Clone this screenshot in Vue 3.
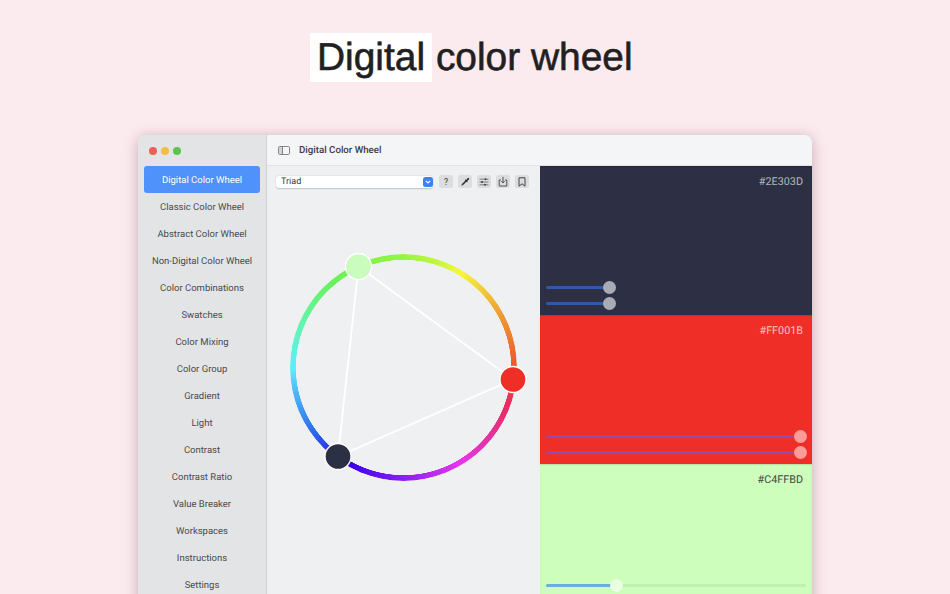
<template>
  <div class="page">
    <h1 class="headline"><span class="mark">Digital</span> color wheel</h1>

    <div class="window">
      <aside class="sidebar">
        <div class="traffic">
          <i class="dot red"></i>
          <i class="dot yellow"></i>
          <i class="dot green"></i>
        </div>
        <nav class="nav">
          <div
            v-for="(item, idx) in menu"
            :key="item"
            class="nav-item"
            :class="{ active: idx === 0 }"
          >{{ item }}</div>
        </nav>
      </aside>

      <main class="main">
        <header class="titlebar">
          <svg class="side-icon" width="12" height="9" viewBox="0 0 12 9">
            <rect x="0.5" y="0.5" width="11" height="8" rx="1.2" fill="none" stroke="#77797d" stroke-width="0.9" />
            <rect x="1" y="1" width="3.4" height="7" fill="#d2d3d6" />
            <line x1="4.5" y1="0.5" x2="4.5" y2="8.5" stroke="#77797d" stroke-width="0.9" />
          </svg>
          <span class="title">Digital Color Wheel</span>
        </header>

        <div class="content">
          <section class="wheel-pane">
            <div class="toolbar">
              <div class="select">
                <span class="select-label">Triad</span>
                <span class="stepper">
                  <svg width="6" height="4" viewBox="0 0 6 4">
                    <path d="M0.8 0.8 L3 3 L5.2 0.8" fill="none" stroke="#fff" stroke-width="1.2" />
                  </svg>
                </span>
              </div>
              <div class="tools">
                <button class="tool"><span class="q">?</span></button>
                <button class="tool">
                  <svg width="10" height="10" viewBox="0 0 10 10">
                    <path d="M1.2 8.8 L2 6.9 L5.6 3.3 L6.7 4.4 L3.1 8 Z" fill="#333" />
                    <path d="M5.3 2.3 L6.2 3 L7.6 1.3 Q8.5 0.7 9.1 1.3 Q9.5 2 8.8 2.6 L7.1 3.9 L7.8 4.8 L7 5.2 L4.9 3.1 Z" fill="#222" />
                  </svg>
                </button>
                <button class="tool">
                  <svg width="10" height="8" viewBox="0 0 10 8">
                    <path d="M0.5 1.2 H9.5 M0.5 4 H9.5 M0.5 6.8 H9.5" stroke="#666" stroke-width="0.8" />
                    <circle cx="6.5" cy="1.2" r="1" fill="#444" />
                    <circle cx="3" cy="4" r="1" fill="#444" />
                    <circle cx="6" cy="6.8" r="1" fill="#444" />
                  </svg>
                </button>
                <button class="tool">
                  <svg width="10" height="11" viewBox="0 0 10 11">
                    <path d="M3 4 H1.2 V10 H8.8 V4 H7" fill="none" stroke="#444" stroke-width="0.9" />
                    <path d="M5 0.8 V6.8 M3.4 5.2 L5 6.9 L6.6 5.2" fill="none" stroke="#444" stroke-width="0.9" />
                  </svg>
                </button>
                <button class="tool">
                  <svg width="8" height="10" viewBox="0 0 8 10">
                    <path d="M1 0.8 H7 V9.2 L4 6.8 L1 9.2 Z" fill="none" stroke="#444" stroke-width="1" />
                  </svg>
                </button>
              </div>
            </div>

            <div class="wheel">
              <div class="ring"></div>
              <svg class="wheel-lines" width="273" height="300" viewBox="0 0 273 300">
                <polygon :points="trianglePoints" fill="none" stroke="#fff" stroke-width="1.8" />
                <circle
                  v-for="k in knobs"
                  :key="k.color"
                  :cx="k.x"
                  :cy="k.y"
                  r="13"
                  :fill="k.color"
                  stroke="#fff"
                  stroke-width="1.3"
                />
              </svg>
            </div>
          </section>

          <section class="swatches">
            <div
              v-for="s in swatches"
              :key="s.hex"
              class="swatch"
              :class="s.theme"
            >
              <div class="hex">{{ s.hex }}</div>
              <div class="sliders">
                <div v-for="(v, i) in s.values" :key="i" class="slider">
                  <div class="fill" :style="{ width: v + '%' }"></div>
                  <div class="thumb" :style="{ left: v + '%' }"></div>
                </div>
              </div>
            </div>
          </section>
        </div>
      </main>
    </div>
  </div>
</template>

<script setup>
import { computed } from 'vue'

const menu = [
  'Digital Color Wheel',
  'Classic Color Wheel',
  'Abstract Color Wheel',
  'Non-Digital Color Wheel',
  'Color Combinations',
  'Swatches',
  'Color Mixing',
  'Color Group',
  'Gradient',
  'Light',
  'Contrast',
  'Contrast Ratio',
  'Value Breaker',
  'Workspaces',
  'Instructions',
  'Settings'
]

// knob positions are relative to the wheel box
const knobs = [
  { x: 91.5, y: 69.5, color: '#c9fcbd' },
  { x: 246, y: 182.5, color: '#ee2e27' },
  { x: 71, y: 259.5, color: '#2c3045' }
]

const trianglePoints = computed(() => knobs.map(k => `${k.x},${k.y}`).join(' '))

const swatches = [
  { hex: '#2E303D', theme: 'dark', values: [24.6, 24.6] },
  { hex: '#FF001B', theme: 'red', values: [97.7, 97.7] },
  { hex: '#C4FFBD', theme: 'pale', values: [27, 27] }
]
</script>

<style>
html, body {
  margin: 0;
  background: #fbeaee;
}
</style>

<style scoped>
.page {
  height: 594px;
  overflow: hidden;
  background: #fbeaee;
  font-family: Roboto, "Liberation Sans", sans-serif;
  text-rendering: geometricPrecision;
}

.headline {
  margin: 0;
  padding: 33px 0 0 310px;
  height: 135px;
  box-sizing: border-box;
  font-family: "Liberation Sans", Arial, sans-serif;
  font-size: 38.9px;
  line-height: 49px;
  font-weight: 400;
  color: #221f20;
  -webkit-text-stroke: 0.6px #221f20;
}

.mark {
  display: inline-block;
  padding: 0 7px;
  margin-right: -7px;
  background: #fff;
}

.window {
  display: flex;
  width: 674px;
  height: 480px;
  margin-left: 138px;
  border-radius: 8px 8px 0 0;
  overflow: hidden;
  box-shadow: 0 2px 14px rgba(90, 60, 70, 0.35);
}

.sidebar {
  flex: none;
  width: 129px;
  background: #e3e4e5;
  border-right: 1px solid #d3d3d5;
  box-sizing: border-box;
}

.traffic {
  display: flex;
  gap: 4px;
  height: 31px;
  align-items: center;
  padding-left: 11px;
}

.dot {
  width: 8px;
  height: 8px;
  border-radius: 50%;
}
.dot.red { background: #ee5f57; }
.dot.yellow { background: #f5bd3f; }
.dot.green { background: #5fc24f; }

.nav {
  padding: 0 6px;
}

.nav-item {
  height: 27px;
  line-height: 29px;
  text-align: center;
  font-size: 9.5px;
  color: #4a4a4c;
  border-radius: 3px;
  white-space: nowrap;
}

.nav-item.active {
  background: #5092fb;
  color: #fff;
}

.main {
  flex: 1;
  display: flex;
  flex-direction: column;
  min-width: 0;
}

.titlebar {
  flex: none;
  display: flex;
  align-items: center;
  height: 31px;
  box-sizing: border-box;
  padding: 0 0 0 11px;
  gap: 9px;
  background: #f4f5f7;
  border-bottom: 1px solid #e2e3e5;
}

.title {
  font-size: 9.7px;
  font-weight: 500;
  color: #3c3c3f;
}

.content {
  flex: 1;
  display: flex;
  min-height: 0;
}

.wheel-pane {
  flex: none;
  width: 273px;
  background: #eff0f2;
}

.toolbar {
  display: flex;
  align-items: center;
  height: 31px;
  padding: 0 10px 0 9px;
}

.select {
  width: 157px;
  height: 12px;
  display: flex;
  align-items: center;
  justify-content: space-between;
  padding-left: 5px;
  box-sizing: border-box;
  background: #fff;
  border-radius: 3px;
  box-shadow: 0 0.5px 1.5px rgba(0, 0, 0, 0.2);
  font-size: 9px;
  color: #3a3a3c;
}

.select-label {
  padding-top: 1px;
}

.stepper {
  width: 10px;
  height: 10px;
  display: flex;
  align-items: center;
  justify-content: center;
  background: #3d82f2;
  border-radius: 2.5px;
  margin-right: 0.5px;
}

.tools {
  display: flex;
  gap: 5px;
  margin-left: 6px;
}

.tool {
  width: 14px;
  height: 13px;
  padding: 0;
  border: 0;
  border-radius: 2.5px;
  background: #dcdddf;
  display: flex;
  align-items: center;
  justify-content: center;
}

.q {
  font-size: 8.5px;
  font-weight: 500;
  color: #555;
  font-family: Roboto, sans-serif;
}

.wheel {
  position: relative;
  height: 300px;
}

.ring {
  position: absolute;
  left: 23px;
  top: 57px;
  width: 227px;
  height: 227px;
  border-radius: 50%;
  background: conic-gradient(
    #96f442 0deg,
    #c4f63e 18deg,
    #f6f73f 31deg,
    #ee9a33 62deg,
    #ee5a28 88deg,
    #ea2a62 110deg,
    #e5329a 128deg,
    #e635ee 150deg,
    #8a1ff0 180deg,
    #3200e6 212deg,
    #2a62ea 232deg,
    #4cb4fa 256deg,
    #5ceeff 270deg,
    #62f5b0 292deg,
    #6af05c 320deg,
    #96f442 360deg
  );
  -webkit-mask: radial-gradient(closest-side, transparent 107.4px, #000 107.9px);
  mask: radial-gradient(closest-side, transparent 107.4px, #000 107.9px);
}

.wheel-lines {
  position: absolute;
  left: 0;
  top: 0;
}

.swatches {
  flex: 1;
  min-width: 0;
}

.swatch {
  display: flex;
  flex-direction: column;
  justify-content: space-between;
  height: 149px;
  box-sizing: border-box;
  padding: 9px 9px 10px 6px;
  font-size: 10.8px;
  box-shadow: inset 0 1px 1px rgba(0, 0, 0, 0.12);
}

.swatch.dark { background: #2d3044; color: #b4b5bb; }
.swatch.red { background: #ee2e27; color: #f5c3bd; }
.swatch.pale { background: #cdfebb; color: #45493f; }

.hex {
  text-align: right;
  line-height: 13px;
}

.sliders {
  display: flex;
  flex-direction: column;
  gap: 13px;
}

.slider {
  position: relative;
  height: 3px;
  width: 260px;
  border-radius: 1.5px;
}

.swatch.pale .slider {
  background: #bff0b0;
}

.fill {
  height: 100%;
  border-radius: 1.5px;
}

.swatch.dark .fill { background: #2f5aa6; }
.swatch.red .fill { background: #8e4cae; }
.swatch.pale .fill { background: #6aafdc; }

.thumb {
  position: absolute;
  top: 50%;
  width: 13px;
  height: 13px;
  margin: -6.5px 0 0 -6.5px;
  border-radius: 50%;
}

.swatch.dark .thumb { background: #a9abb4; }
.swatch.red .thumb { background: #fb9c98; }
.swatch.pale .thumb { background: #e9ffe2; }
</style>
